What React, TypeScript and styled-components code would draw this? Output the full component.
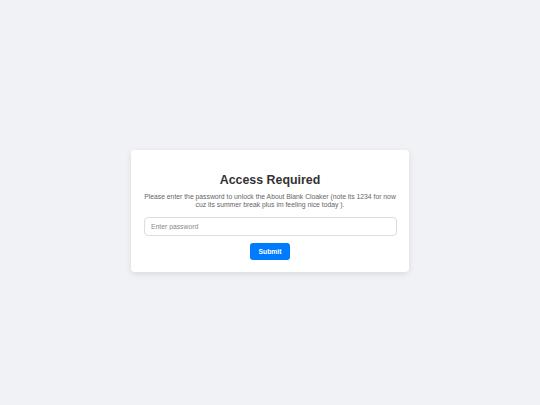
import styled, { createGlobalStyle } from "styled-components";

const GlobalStyle = createGlobalStyle`
    html, body {
        margin: 0;
        padding: 0;
        background: #f0f2f5;
        font-family: "Liberation Sans", Arial, sans-serif;
    }
`;

function App() {
    return (
        <>
            <GlobalStyle />
            <Page>
                <Card>
                    <Title>Access Required</Title>
                    <Message>
                        Please enter the password to unlock the About Blank Cloaker (note its 1234 for now
                        cuz its summer break plus im feeling nice today ).
                    </Message>
                    <PasswordInput type="password" placeholder="Enter password" />
                    <SubmitButton>Submit</SubmitButton>
                </Card>
            </Page>
        </>
    )
}

export default App

const Page = styled.div`
    min-height: 100vh;
    box-sizing: border-box;
    padding-top: 17px;
    display: flex;
    align-items: center;
    justify-content: center;
`;

const Card = styled.div`
    width: 278px;
    box-sizing: border-box;
    padding: 13px 12.5px 12px;
    background: #fff;
    border-radius: 4px;
    box-shadow: 0 2px 6px rgba(0, 0, 0, 0.1);
    display: flex;
    flex-direction: column;
    align-items: center;
    text-align: center;
`;

const Title = styled.h2`
    margin: 10px 0 5px;
    font-size: 12.4px;
    line-height: 15px;
    font-weight: bold;
    color: #333;
`;

const Message = styled.p`
    margin: 0 0 8px;
    font-size: 6.8px;
    line-height: 8px;
    color: #666;
`;

const PasswordInput = styled.input`
    width: 100%;
    height: 18.5px;
    box-sizing: border-box;
    padding: 0 6.5px;
    border: 1px solid #ddd;
    border-radius: 4px;
    font-family: inherit;
    font-size: 6.8px;
    color: #333;
    outline: none;

    &::placeholder {
        color: #888;
    }
`;

const SubmitButton = styled.button`
    margin-top: 7px;
    width: 40.5px;
    height: 17.5px;
    padding: 0;
    border: none;
    border-radius: 3px;
    background: #007bff;
    color: #fff;
    font-family: inherit;
    font-size: 6.8px;
    font-weight: bold;
    cursor: pointer;
`;
